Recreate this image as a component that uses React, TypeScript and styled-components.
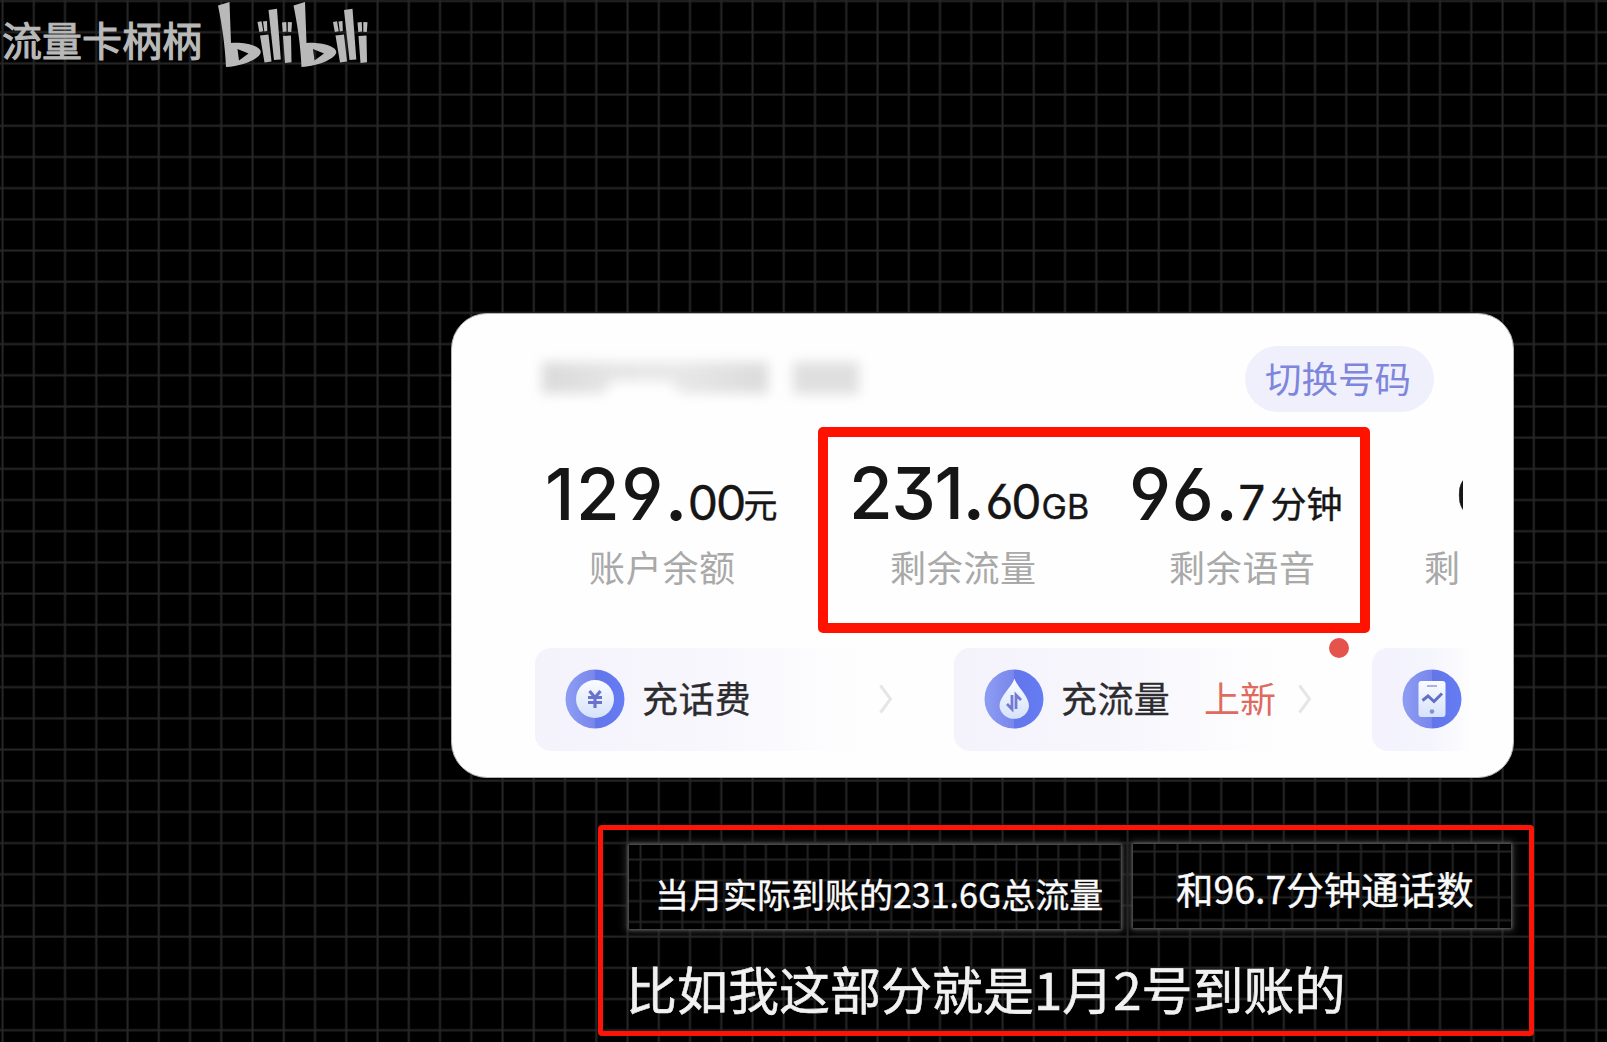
import React from "react";
import styled, { createGlobalStyle, css } from "styled-components";

const CJK = `"Noto Sans CJK SC", "Noto Sans", sans-serif`;

const GlobalStyle = createGlobalStyle`
  *, *::before, *::after { box-sizing: border-box; }
  body { margin: 0; background: #000; font-family: ${CJK}; }
`;

const gridLines = (pitchX: number, pitchY: number, x: number, y: number, color: string) => css`
  background-color: #000;
  background-image:
    linear-gradient(90deg, transparent 0, ${color} 1px, ${color} 2px, transparent 3.2px),
    linear-gradient(180deg, transparent 0, ${color} 1px, ${color} 2px, transparent 3.2px);
  background-size: ${pitchX}px 100%, 100% ${pitchY}px;
  background-position: ${x}px 0, 0 ${y}px;
`;

const Stage = styled.main`
  position: relative;
  width: 1607px;
  height: 1042px;
  overflow: hidden;
  display: flex;
  flex-direction: column;
  ${gridLines(31.25, 31.2, 1, -0.5, "#262626")}
`;

const Watermark = styled.header`
  display: flex;
  align-items: flex-start;
  height: 312.5px;
  flex: none;
  padding-left: 2px;
`;

const Author = styled.span`
  width: 214px;
  padding-top: 19px;
  font-size: 40px;
  line-height: 40px;
  color: #b9b9b9;
  -webkit-text-stroke: 1.1px #b9b9b9;
  white-space: nowrap;
`;

const Card = styled.section`
  position: relative;
  flex: none;
  width: 1063px;
  height: 465px;
  margin-left: 451px;
  padding: 31px 43px 0 83px;
  background: #fefefe;
  border: 1.5px solid #b4b4b6;
  border-radius: 36px;
`;

const CardTop = styled.div`
  display: flex;
  justify-content: space-between;
  height: 68px;
  padding-right: 36px;
`;

const MaskedNumber = styled.div`
  display: flex;
  gap: 25px;
  padding: 17px 0 0 7px;
  filter: blur(6px);
`;

const Smudge = styled.span<{ $w: number }>`
  width: ${(p) => p.$w}px;
  height: 32px;
  background: #dfdfdf;
`;

const SmudgeLong = styled(Smudge)`
  background: linear-gradient(90deg, #dadada, #e6e6e6 35%, #e8e8e8 60%, #dbdbdb);
  clip-path: polygon(0 0, 100% 0, 100% 100%, 62% 100%, 56% 62%, 31% 62%, 27% 100%, 0 100%);
`;

const SwitchButton = styled.button`
  width: 189px;
  height: 66px;
  margin-top: 1px;
  padding: 0 3px 3px 0;
  border: 0;
  border-radius: 34px;
  background: #f0f0fc;
  color: #7d86dc;
  font: 400 36.5px/63px ${CJK};
  white-space: nowrap;
`;

const Metrics = styled.div`
  display: flex;
  height: 235px;
  width: 928px;
  padding-top: 38px;
  overflow: hidden;
`;

const Metric = styled.div<{ $w: number }>`
  flex: none;
  width: ${(p) => p.$w}px;
`;

const Value = styled.div<{ $pad: number; $lift?: number }>`
  display: flex;
  align-items: baseline;
  height: 94px;
  padding-left: ${(p) => p.$pad}px;
  margin-top: ${(p) => -(p.$lift ?? 0)}px;
  margin-bottom: ${(p) => p.$lift ?? 0}px;
  color: #161616;
  font-family: Inter, ${CJK};
  font-feature-settings: "cv03", "cv04", "cv09";
  line-height: 86px;
  white-space: nowrap;
`;

const Whole = styled.span<{ $track: number }>`
  font-size: 71px;
  font-weight: 500;
  letter-spacing: ${(p) => p.$track}px;
`;

const Point = styled.span`
  width: 23px;
  font-size: 71px;
  font-weight: 600;
`;

const Fraction = styled.span<{ $size?: number }>`
  font-size: ${(p) => p.$size ?? 48}px;
  font-weight: 400;
  letter-spacing: -2px;
  -webkit-text-stroke: 0.4px #161616;
`;

const Unit = styled.span<{ $gap: number; $size?: number }>`
  margin-left: ${(p) => p.$gap}px;
  font-size: ${(p) => p.$size ?? 34}px;
  font-weight: 400;
  -webkit-text-stroke: 0.4px #161616;
`;

const CjkUnit = styled(Unit)`
  position: relative;
  top: -1.5px;
`;

const Label = styled.div<{ $pad: number }>`
  padding-left: ${(p) => p.$pad}px;
  font-size: 36px;
  line-height: 42px;
  letter-spacing: 0.7px;
  color: #a9a9a9;
  white-space: nowrap;
`;

const Actions = styled.div`
  display: flex;
  gap: 9px;
  height: 103px;
  width: 934px;
  overflow: hidden;
`;

const Tile = styled.div<{ $w: number }>`
  flex: none;
  display: flex;
  align-items: center;
  width: ${(p) => p.$w}px;
  padding-left: 30px;
  border-radius: 16px;
  background: linear-gradient(90deg, #f4f3fc 0, #f8f7fd 45%, #fefefe 80%);
`;

const NarrowTile = styled(Tile)`
  padding-left: 30px;
  background: linear-gradient(90deg, #f3f2fd 0, #f5f5fd 60px, #fdfdfe 96px);
`;

const ActionName = styled.span<{ $w: number }>`
  width: ${(p) => p.$w}px;
  margin: -4px 0 0 17px;
  font-size: 36px;
  line-height: 40px;
  letter-spacing: 0.4px;
  color: #2c2c2e;
  -webkit-text-stroke: 0.3px #2c2c2e;
  white-space: nowrap;
`;

const NewTag = styled.span`
  width: 94px;
  margin-top: -4px;
  font-size: 36px;
  line-height: 40px;
  color: #df6a5e;
  white-space: nowrap;
`;

const RedDot = styled.i`
  position: absolute;
  left: 877px;
  top: 324px;
  width: 20px;
  height: 20px;
  border-radius: 50%;
  background: #e5534d;
`;

const MetricFrame = styled.div`
  position: absolute;
  left: 818px;
  top: 427px;
  width: 552px;
  height: 206px;
  border: 10px solid #ff1200;
  border-radius: 5px;
`;

const CaptionFrame = styled.section`
  flex: none;
  width: 936px;
  height: 211px;
  margin: 47px 0 0 598px;
  padding: 14px 0 0 26px;
  border: 5px solid #fb1407;
  border-radius: 4px;
`;

const CaptionRow = styled.div`
  display: flex;
  gap: 12px;
`;

const captionBox = css`
  color: #fafafa;
  white-space: nowrap;
  -webkit-text-stroke: 0.4px #fafafa;
  box-shadow: 0 0 3px 1px #606060, 0 0 8px 3px #2c2c2c;
`;

const DataCaption = styled.div`
  ${captionBox}
  ${gridLines(20.9, 20.8, 10, 13, "#222")}
  width: 492px;
  height: 84px;
  margin-top: 1px;
  padding-left: 26px;
  font-size: 34px;
  line-height: 97px;
`;

const VoiceCaption = styled.div`
  ${captionBox}
  ${gridLines(22.95, 22.9, 20, 6, "#222")}
  width: 378px;
  height: 84px;
  padding-left: 43px;
  font-size: 37.5px;
  line-height: 87px;
`;

const Subtitle = styled.p`
  margin: 23px 0 0 -3px;
  font-size: 51px;
  line-height: 72px;
  color: #f1f1f1;
  white-space: nowrap;
  -webkit-text-stroke: 0.6px #f1f1f1;
`;

const BilibiliMark = () => (
  <svg width="152" height="70" viewBox="0 0 152 70" fill="#b9b9b9">
    {[0, 75.5].map((dx) => (
      <g key={dx} transform={`translate(${dx + 1} 0)`}>
        <path
          fillRule="evenodd"
          d="M1 5.5 12.5 2 14 43 C28 42 43.5 46 43.8 52 C43.8 58 27 66 9 67 C8 45 5 25 1 5.5Z M20.5 49 22 60.5 31.5 53.5Z"
        />
        <path d="M40.5 22 44.5 21.3 46.3 31.3 42.3 32Z M46 21.5 50 21 50.3 31 47.3 31.5Z" />
        <path d="M43 35.5 51.5 34.5 54.5 61.5 47.5 62.5Z" />
        <path d="M51.5 10 60 8.7 63.8 59.5 57 60Z" />
        <path d="M65 22.5 69.3 22 69.6 31.5 65.8 32Z M70.8 22 75 22.3 74.3 32 70.8 31.8Z" />
        <path d="M66 36 74 35.5 74.5 62.3 68 63Z" />
      </g>
    ))}
  </svg>
);

const Disc = ({ id, children }: { id: string; children: React.ReactNode }) => (
  <svg width="60" height="60" viewBox="0 0 60 60">
    <defs>
      <linearGradient id={id}>
        <stop offset="0" stopColor="#8e9df3" />
        <stop offset=".49" stopColor="#7887eb" />
        <stop offset=".51" stopColor="#6375e9" />
        <stop offset="1" stopColor="#657cf4" />
      </linearGradient>
      <linearGradient id={`${id}-face`} x1="0" x2="0" y1="0" y2="1">
        <stop offset="0" stopColor="#fafcff" />
        <stop offset="1" stopColor="#d6e2fb" />
      </linearGradient>
    </defs>
    <circle cx="30" cy="30" r="29.5" fill={`url(#${id})`} />
    {children}
  </svg>
);

const YuanIcon = () => (
  <Disc id="yuan">
    <circle cx="30" cy="30" r="19" fill="url(#yuan-face)" />
    <path
      d="M24.5 22 30 28.5 35.5 22 M23 28.5H37 M23 33.5H37 M30 28V39"
      fill="none"
      stroke="#6b73cf"
      strokeWidth="3.2"
    />
  </Disc>
);

const DropIcon = () => (
  <Disc id="drop">
    <path d="M30.5 9.5 C33 18 45 27 45 37 A14.8 14 0 0 1 15.5 37 C15.5 27 28 18 30.5 9.5Z" fill="url(#drop-face)" />
    <path d="M28 26V40L23 35 M32 40V26L37 31" fill="none" stroke="#727bd1" strokeWidth="2.8" />
  </Disc>
);

const PhoneIcon = () => (
  <Disc id="phone">
    <rect x="16.5" y="12" width="27" height="36" rx="3" fill="url(#phone-face)" />
    <path d="M25 17H35" stroke="#a9b2e0" strokeWidth="2" />
    <path d="M20.5 31.5 26 27 32 32.5 40 24.5" fill="none" stroke="#646ec6" strokeWidth="3" />
    <circle cx="30" cy="42.5" r="2.3" fill="#8790cd" />
  </Disc>
);

const Chevron = () => (
  <svg width="14" height="30" viewBox="0 0 14 30" fill="none" stroke="#e6e6e9" strokeWidth="3">
    <path d="M1.5 1.5 11.5 15 1.5 28.5" />
  </svg>
);

export default function App() {
  return (
    <>
      <GlobalStyle />
      <Stage>
        <Watermark>
          <Author>流量卡柄柄</Author>
          <BilibiliMark />
        </Watermark>

        <Card>
          <CardTop>
            <MaskedNumber>
              <SmudgeLong $w={226} />
              <Smudge $w={66} />
            </MaskedNumber>
            <SwitchButton>切换号码</SwitchButton>
          </CardTop>

          <Metrics>
            <Metric $w={300}>
              <Value $pad={10}>
                <Whole $track={1.5}>129</Whole>
                <Point>.</Point>
                <Fraction>00</Fraction>
                <CjkUnit $gap={-1}>元</CjkUnit>
              </Value>
              <Label $pad={54}>账户余额</Label>
            </Metric>
            <Metric $w={280}>
              <Value $pad={14} $lift={1}>
                <Whole $track={-1.5}>231</Whole>
                <Point>.</Point>
                <Fraction>60</Fraction>
                <Unit $gap={2}>GB</Unit>
              </Value>
              <Label $pad={55}>剩余流量</Label>
            </Metric>
            <Metric $w={300}>
              <Value $pad={14}>
                <Whole $track={1.5}>96</Whole>
                <Point>.</Point>
                <Fraction>7</Fraction>
                <CjkUnit $gap={7} $size={36}>分钟</CjkUnit>
              </Value>
              <Label $pad={54}>剩余语音</Label>
            </Metric>
            <Metric $w={120}>
              <Value $pad={41} $lift={-2}>
                <Fraction $size={52}>0</Fraction>
              </Value>
              <Label $pad={9}>剩</Label>
            </Metric>
          </Metrics>

          <Actions>
            <Tile $w={410}>
              <YuanIcon />
              <ActionName $w={237}>充话费</ActionName>
              <Chevron />
            </Tile>
            <Tile $w={409}>
              <DropIcon />
              <ActionName $w={143}>充流量</ActionName>
              <NewTag>上新</NewTag>
              <Chevron />
            </Tile>
            <NarrowTile $w={120}>
              <PhoneIcon />
            </NarrowTile>
          </Actions>
          <RedDot />
        </Card>

        <CaptionFrame>
          <CaptionRow>
            <DataCaption>当月实际到账的231.6G总流量</DataCaption>
            <VoiceCaption>和96.7分钟通话数</VoiceCaption>
          </CaptionRow>
          <Subtitle>比如我这部分就是1月2号到账的</Subtitle>
        </CaptionFrame>

        <MetricFrame />
      </Stage>
    </>
  );
}
